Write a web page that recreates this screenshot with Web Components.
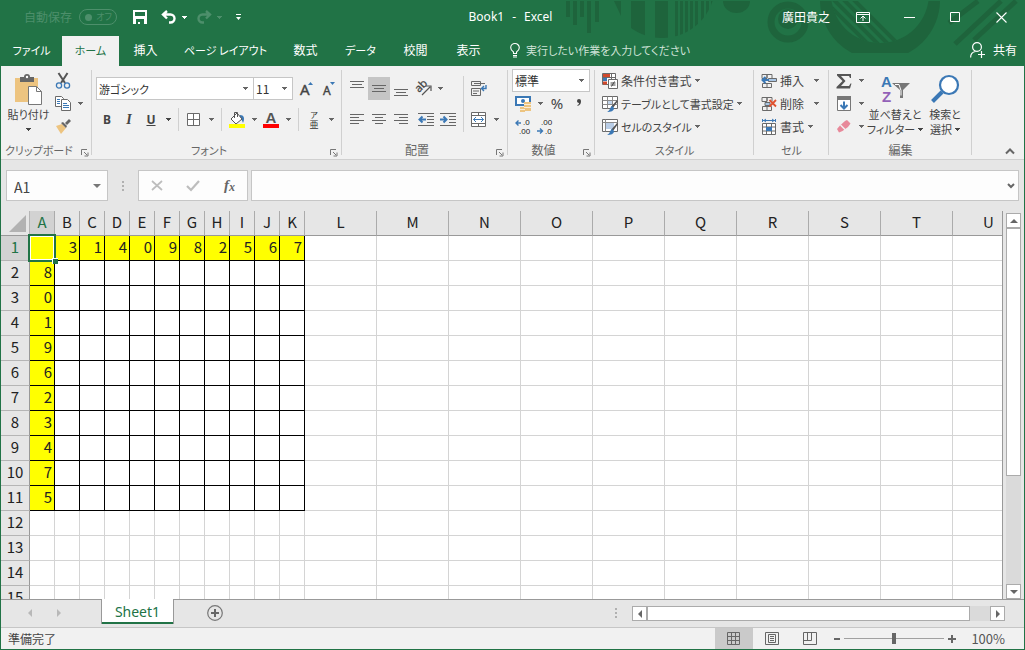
<!DOCTYPE html>
<html lang="ja">
<head>
<meta charset="utf-8">
<title>Book1 - Excel</title>
<style>
html, body { margin: 0; height: 100%; }
body { overflow: hidden; font: 12px/16px "Noto Sans CJK JP", sans-serif; font-feature-settings: "palt"; color: #444; background: #e6e6e6; }
</style>
</head>
<body>
<excel-app></excel-app>

<script>
const BASE = `<style>
*, ::before, ::after { box-sizing: border-box; }
button, input, select { font: inherit; font-feature-settings: inherit; color: inherit; background: none; border: 0; padding: 0; margin: 0; outline: 0; border-radius: 0; }
[hidden] { display: none !important; }
</style>`;

function define(name, html, setup) {
  const template = document.createElement('template');
  template.innerHTML = BASE + html;
  customElements.define(name, class extends HTMLElement {
    connectedCallback() {
      if (this.shadowRoot) return;
      const root = this.attachShadow({ mode: 'open' });
      root.append(template.content.cloneNode(true));
      if (setup) setup(root, this);
    }
  });
}

const G = '#6a6a6a', B = '#3b78b5';
const cellsBack = `<path d="M1 1.5h5v4H1zM6 1.5h5v4M1.500 10.500h9v4h-9zM6 10.500v4M6 1v4" fill="none" stroke="${G}"/>`;
const sheetBrush = fill => `<path d="M.5.5h15v12H.5z" fill="#fff" stroke="${G}"/>${fill}<path d="M15 4l1 1-5 7-2-1z" fill="#555"/><path d="M10 10l2 2c0 3-3 4-7 4 3-1 3-5 5-6z" fill="${B}"/>`;
const lines = (...l) => `<path d="${l.map(([x, y, w]) => `M${x} ${y}.5h${w}`).join('')}" stroke="#666"/>`;

const ICONS = {
  arrow: [5, 3, '<path d="M0 0h5v1H4v1H3v1H2V2H1V1H0z" fill="currentColor"/>'],
  save: [14, 14, '<path d="M0 0h14v14H0zM2 2v4h10V2zM3 9v5h2v-2h2v2h4V9z" fill="#fff" fill-rule="evenodd"/>'],
  undo: [16, 14, '<path d="M6 1L2 4.500 6 8.500M2 4.500h7.500a4 4 0 0 1 0 8H8" fill="none" stroke="#fff" stroke-width="2.400"/>'],
  redo: [16, 14, '<path d="M10 1l4 3.500-4 4M14 4.500H6.500a4 4 0 0 0 0 8H8" fill="none" stroke="#4d8f6b" stroke-width="2.400"/>'],
  customize: [5, 6, '<path d="M0 0h5v1H0zM0 3h5L2.500 6z" fill="#fff"/>'],
  display: [14, 11, '<path d="M.5.5h13v10H.5zM1 2.500h12M7 9V4.500M4.500 6.500L7 4l2.500 2.500" fill="none" stroke="#fff"/>'],
  minimize: [11, 11, '<path d="M0 5.500h11" stroke="#fff"/>'],
  maximize: [11, 11, '<path d="M.5.5h9v9h-9z" fill="none" stroke="#fff"/>'],
  close: [11, 11, '<path d="M.5.5l10 10M10.500.5l-10 10" stroke="#fff" stroke-width="1.100"/>'],
  bulb: [10, 15, '<path d="M3.500 10.500V9C2 8 .7 7 .7 4.800a4.300 4.300 0 0 1 8.600 0C9.300 7 8 8 6.500 9v1.500zM3 12.500h4M3 14h4" fill="none" stroke="#fff" stroke-width="1.100"/>'],
  share: [16, 16, '<circle cx="7" cy="5" r="4.400" fill="none" stroke="#fff" stroke-width="1.200"/><path d="M.6 15.500c0-3 2-5.500 5-6M8 12.500h7M11.500 9v7" fill="none" stroke="#fff" stroke-width="1.200"/>'],
  paste: [29, 32, '<path d="M1 4h23v24H1z" fill="#edc480"/><path d="M6 3h4a3 3 0 0 1 6 0h4v5H6z" fill="#666"/><circle cx="13" cy="3" r="1.200" fill="#fff"/><path d="M14.500 12.500h8l5 5v13h-13z" fill="#fff" stroke="#777"/><path d="M22.500 12.500v5h5" fill="none" stroke="#777"/>'],
  cut: [16, 16, `<path d="M3.500 0L10 10M12.500 0L6 10" stroke="#555" stroke-width="2"/><circle cx="4" cy="12.500" r="2.600" fill="none" stroke="${B}" stroke-width="1.300"/><circle cx="12" cy="12.500" r="2.600" fill="none" stroke="${B}" stroke-width="1.300"/>`],
  copy: [16, 15, `<path d="M.5.5h6l2 2v8h-8z" fill="#fff" stroke="${G}"/><path d="M6.500 3.500h6l3 3v8h-9z" fill="#fff" stroke="${G}"/><path d="M2 3.500h3M2 5.500h3M2 7.500h3M8 7.500h4M8 9.500h6M8 11.500h6" stroke="${B}"/>`],
  painter: [16, 15, '<path d="M1 7l6-2 4 4-5 6z" fill="#edc480"/><path d="M6 4l2-1 4 4-1 2zM10 4l4-4 2 2-4 4z" fill="#666"/>'],
  borders: [14, 14, `<path d="M.5.5h12v12H.5zM6.500 1v11M1 6.500h11" fill="#fff" stroke="${G}"/>`],
  fill: [16, 17, `<path d="M11 4c4 0 5 3 3 8-1-3-2-4-4-5z" fill="${B}"/><path d="M2 8l6-6 5 6-6 5z" fill="#fff" stroke="#555"/><path d="M5.500 7V1.500h3V6" fill="none" stroke="#555"/><path d="M0 13h16v4H0z" fill="#ff0"/>`],
  color: [16, 17, '<text x="8" y="12" text-anchor="middle" font-family="Liberation Sans" font-weight="700" font-size="15" fill="#555">A</text><path d="M0 13h16v4H0z" fill="red"/>'],
  grow: [14, 15, `<text x="0" y="14" font-family="Noto Sans" font-size="15" fill="#444" stroke="#444" stroke-width=".4">A</text><path d="M8 4h5l-2.500-3z" fill="${B}"/>`],
  shrink: [14, 15, `<text x="1" y="14" font-family="Noto Sans" font-size="12" fill="#444" stroke="#444" stroke-width=".4">A</text><path d="M8 1h5l-2.500 3z" fill="${B}"/>`],
  phonetic: [12, 18, '<text x="6" y="7" text-anchor="middle" font-size="8" fill="#333">ア</text><text x="6" y="17" text-anchor="middle" font-size="9" fill="#333">亜</text>'],
  top: [14, 16, lines([0, 0, 14], [2, 3, 10], [0, 6, 14])],
  middle: [14, 16, lines([0, 4, 14], [2, 7, 10], [0, 10, 14])],
  bottom: [14, 16, lines([0, 8, 14], [2, 11, 10], [0, 14, 14])],
  left: [14, 16, lines([0, 2, 14], [0, 5, 9], [0, 8, 14], [0, 11, 9])],
  center: [14, 16, lines([0, 2, 14], [3, 5, 8], [0, 8, 14], [3, 11, 8])],
  right: [14, 16, lines([0, 2, 14], [5, 5, 9], [0, 8, 14], [5, 11, 9])],
  orient: [18, 16, '<text transform="translate(5 12) rotate(-45)" font-family="Noto Sans" font-size="11" fill="#444" stroke="#444" stroke-width=".3">ab</text><path d="M8 14l8-8M12 5h5v5" fill="none" stroke="#555" stroke-width="1.200"/>'],
  outdent: [16, 14, lines([0, 0, 16], [9, 3, 7], [9, 6, 7], [9, 9, 7], [0, 12, 16]) + `<path d="M8 6.500H2M4.500 3.500l-3 3 3 3" fill="none" stroke="${B}" stroke-width="2"/>`],
  indent: [16, 14, lines([0, 0, 16], [9, 3, 7], [9, 6, 7], [9, 9, 7], [0, 12, 16]) + `<path d="M0 6.500h6M3.500 3.500l3 3-3 3" fill="none" stroke="${B}" stroke-width="2"/>`],
  wrap: [16, 16, `<path d="M.5.5h9v4h-9zM.5 7.500h9v7h-9zM3 2.500h11M2 10h6M2 12.500h4" fill="none" stroke="${G}"/><path d="M15 4v3.500h-4M13 5l-2.500 2.500L13 10" fill="none" stroke="${B}" stroke-width="1.400"/>`],
  merge: [16, 16, `<path d="M.5.5h14v14H.5zM.5 3.500h14M.5 11.500h14M7.500.5v3M7.500 11.500v3" fill="#fff" stroke="${G}"/><path d="M2.500 7.500h10M5 5L2.500 7.500 5 10M10 5l2.500 2.500L10 10" fill="none" stroke="${B}"/>`],
  money: [17, 16, `<path d="M1 1h14v8H1z" fill="#fff" stroke="${B}" stroke-width="2"/><circle cx="8" cy="5" r="2" fill="${B}"/><path d="M9 6h7v9H9z" fill="#edc480"/><path d="M5 11h5v5H5z" fill="#edc480"/><path d="M9 8.500h7M9 11.500h7M5 13.500h5" stroke="#fff" stroke-width=".7"/>`],
  percent: [14, 16, '<text x="7" y="13" text-anchor="middle" font-family="Noto Sans" font-size="15" fill="#444">%</text>'],
  comma: [8, 16, '<path d="M2 5a2 2 0 1 1 4 0c0 3-1 4-3.500 5v-1C4 8.500 4 7.500 4 7 3 7 2 6 2 5z" fill="#444"/>'],
  incdec: [16, 16, `<text x="8" y="6" font-family="Liberation Sans" font-size="8" fill="#222">.0</text><text x="4" y="15" font-family="Liberation Sans" font-size="8" fill="#222">.00</text><path d="M6 4H1M3.500 1.500L1 4l2.500 2.500" fill="none" stroke="${B}" stroke-width="1.400"/>`],
  decdec: [16, 16, `<text x="4" y="6" font-family="Liberation Sans" font-size="8" fill="#222">.00</text><text x="8" y="15" font-family="Liberation Sans" font-size="8" fill="#222">.0</text><path d="M0 12h5M3 9.500L5.500 12 3 14.500" fill="none" stroke="${B}" stroke-width="1.400"/>`],
  cond: [16, 16, `<path d="M.5.5h13v11H.5z" fill="#fff" stroke="${G}"/><path d="M1 1h7v3H1z" fill="#d0492c"/><path d="M1 5h4v3H1z" fill="${B}"/><path d="M1 8.500h4v3H1z" fill="#d0492c"/><path d="M1 4.500h13M9.500 1v5" stroke="${G}"/><path d="M6.500 6.500h9v9h-9z" fill="#fff" stroke="${G}"/><path d="M8.500 10h5M8.500 12h5M12.500 8.500l-3 5" stroke="#444"/>`],
  table: [16, 16, sheetBrush(`<path d="M5 4h6v5H5z" fill="#c3d6ec"/><path d="M.5 4.500h15M.5 8.500h15M5.500.5v12M10.500.5v12" stroke="#8a8a8a"/>`)],
  cellstyle: [16, 16, sheetBrush(`<path d="M4 3h8v7H4z" fill="#b9cde6"/><path d="M.5 3.500h15M3.500.5v12" stroke="#8a8a8a"/>`)],
  insert: [16, 16, cellsBack + `<path d="M7.500 5.500h8v3h-8z" fill="#a9c6e5" stroke="${G}"/><path d="M8 7H2M4.500 4L1.500 7l3 3" fill="none" stroke="${B}" stroke-width="2"/>`],
  delete: [16, 16, cellsBack + `<path d="M4 6.500h5v3H4z" fill="#a9c6e5" stroke="${G}"/><path d="M8.500 4l6.500 6.500M15 4l-6.500 6.500" stroke="#e0522f" stroke-width="1.800"/>`],
  format: [16, 16, `<path d="M1.500 4.500h13v11h-13zM1.500 8h13M1.500 12h13M5.500 4v11M10.500 4v11" fill="#fff" stroke="${G}"/><path d="M5 8h6v4H5z" fill="${B}"/><path d="M2 1.500h12M1.500 0v3M14.500 0v3M5 0L3 1.500 5 3M11 0l2 1.500L11 3" stroke="${B}" fill="none"/>`],
  sum: [16, 16, '<path d="M1 1h14v4h-1l-1-2H5l4.500 5L5 13h8l1.500-2.500h1L14 15.500H.5V14L6.500 8 1 2.500z" fill="#555"/>'],
  filldown: [14, 16, `<path d="M.5 1.500h13v13H.5z" fill="#fff" stroke="#777"/><path d="M0 0h14v4H0z" fill="#777"/><path d="M7 5.500v7M3.500 9L7 12.500 10.500 9" fill="none" stroke="${B}" stroke-width="2"/>`],
  eraser: [14, 13, '<path d="M8 1l2-1 3.500 3.500L11 7 5.500 11 2 12.500 0 9 3 5.500z" fill="#e8899a"/><path d="M3.500 5l5 5" stroke="#f1f1f1" stroke-width="1.500"/>'],
  sort: [30, 29, `<text x="1" y="12" font-family="Liberation Sans" font-weight="700" font-size="15" fill="${B}">A</text><text x="2" y="27" font-family="Liberation Sans" font-weight="700" font-size="15" fill="#9361b8">Z</text><path d="M12 8h18l-7 7v8h-3v-8z" fill="#777"/><path d="M15 9.500h4l2 6v5" fill="none" stroke="#fff"/>`],
  find: [29, 29, `<path d="M11 17L1.500 26.500" stroke="${B}" stroke-width="4"/><circle cx="18" cy="10" r="9" fill="#fff" stroke="${B}" stroke-width="2.200"/>`],
  launcher: [8, 8, '<path d="M.5 6V.5H6M3 3l3 3M7 3.500V7H3.500" fill="none" stroke="#777"/>'],
  collapse: [10, 6, '<path d="M1 5.500l4-4 4 4" fill="none" stroke="#666" stroke-width="2"/>'],
  cancel: [12, 11, '<path d="M1 1l10 9M11 1L1 10" stroke="#bdbdbd" stroke-width="1.700"/>'],
  enter: [14, 11, '<path d="M1 6l4 4 8-9" fill="none" stroke="#bdbdbd" stroke-width="2.200"/>'],
  fx: [12, 16, '<text x="1" y="12" font-family="Liberation Serif" font-style="italic" font-weight="700" font-size="15" fill="#666">f</text><text x="6" y="13" font-family="Liberation Serif" font-style="italic" font-weight="700" font-size="12" fill="#666">x</text>'],
  expand: [8, 6, '<path d="M1 1l3 3 3-3" fill="none" stroke="#666" stroke-width="2"/>'],
  namearrow: [8, 4, '<path d="M0 0h8L4 4z" fill="#777"/>'],
  dots: [2, 10, '<path d="M0 0h2v2H0zM0 4h2v2H0zM0 8h2v2H0z" fill="#b0b0b0"/>'],
  prev: [4, 8, '<path d="M4 0v8L0 4z" fill="currentColor"/>'],
  next: [4, 8, '<path d="M0 0v8l4-4z" fill="currentColor"/>'],
  up: [8, 4, '<path d="M0 4h8L4 0z" fill="currentColor"/>'],
  down: [8, 4, '<path d="M0 0h8L4 4z" fill="currentColor"/>'],
  add: [16, 16, '<circle cx="8" cy="8" r="7.300" fill="none" stroke="#777" stroke-width="1.200"/><path d="M8 4v8M4 8h8" stroke="#666" stroke-width="2"/>'],
  normal: [14, 13, '<path d="M.5.5h12v12H.5zM.5 4.500h12M.5 8.500h12M4.500.5v12M8.500.5v12" fill="none" stroke="#666"/>'],
  page: [14, 13, '<path d="M.5.5h13v12H.5zM3.500 2.500h7v8h-7zM5 4.500h4M5 6.500h4M5 8.500h4" fill="none" stroke="#666"/>'],
  breaks: [14, 13, '<path d="M.5.5h13v12H.5zM.5 8.500h8M4.500.5v8M8.500.5v8" fill="none" stroke="#666"/>'],
  minus: [6, 8, '<path d="M0 4h6" stroke="#666" stroke-width="2"/>'],
  plus: [8, 8, '<path d="M0 4h8M4 0v8" stroke="#666" stroke-width="2"/>'],
};

define('xl-icon', `<style>
:host { display: inline-flex; flex: none; }
svg { display: block; overflow: visible; }
</style>`, (root, el) => {
  const [w, h, body] = ICONS[el.getAttribute('name')];
  root.innerHTML += `<svg width="${w}" height="${h}" viewBox="0 0 ${w} ${h}" aria-hidden="true">${body}</svg>`;
});

/* Small ribbon command: icon, optional slotted caption, optional drop-down arrow */
define('tool-button', `<style>
:host { display: flex; height: 23px; }
:host([dense]) { font-size: 11px; }
button { display: flex; align-items: center; white-space: nowrap; }
.icon { display: flex; width: 22px; justify-content: center; }
.menu { width: 12px; justify-content: center; color: #666; }
:host([pressed]) .main { background: #c5c5c5; }
:host([split]) .menu { margin-left: 6px; }
</style>
<button class="main"><span class="icon"></span><slot></slot></button><button class="menu" aria-label="メニュー"><xl-icon name="arrow"></xl-icon></button>`,
(root, el) => {
  root.querySelector('.icon').innerHTML = `<xl-icon name="${el.getAttribute('icon')}"></xl-icon>`;
  root.querySelector('.menu').hidden = !el.hasAttribute('menu');
  root.querySelector('.main').setAttribute('aria-label', el.getAttribute('label') || el.textContent);
});

/* Bold / italic / underline */
define('text-button', `<style>
:host { display: flex; height: 23px; }
button { width: 22px; font: 700 12px/16px "Noto Sans", sans-serif; }
</style><button><slot></slot></button>`);

define('large-button', `<style>
:host { display: flex; font-size: 11px; }
button { display: flex; flex-direction: column; align-items: center; width: 100%; line-height: 15px; white-space: nowrap; }
.icon { display: flex; height: 35px; align-items: center; }
.caption { display: flex; flex-direction: column; align-items: center; }
</style><button><span class="icon"></span><span class="caption"><slot></slot></span></button>`,
(root, el) => { root.querySelector('.icon').innerHTML = `<xl-icon name="${el.getAttribute('icon')}"></xl-icon>`; });

define('drop-select', `<style>
:host { display: grid; height: 23px; border: 1px solid #c6c6c6; background: #fff; }
select, xl-icon { grid-area: 1 / 1; align-self: center; }
select { appearance: none; width: 100%; height: 21px; padding-left: 2px; color: #333; }
xl-icon { justify-self: end; padding-right: 5px; color: #666; pointer-events: none; }
:host([dense]) { font-size: 11px; }
</style><select></select><xl-icon name="arrow"></xl-icon>`,
(root, el) => {
  const s = root.querySelector('select');
  s.add(new Option(el.getAttribute('value')));
  s.setAttribute('aria-label', el.getAttribute('label'));
});

define('ribbon-group', `<style>
:host { display: flex; flex-direction: column; flex: none; position: relative; padding: 0 4px; }
:host::after { content: ""; position: absolute; right: 0; top: 4px; bottom: 4px; width: 1px; background: #d0d0d0; }
.content { flex: 1; display: flex; align-items: flex-start; }
footer { display: grid; height: 16px; margin-bottom: 1px; text-align: center; color: #666; white-space: nowrap; }
footer span, footer button { grid-area: 1 / 1; }
:host([launcher]) span { padding-right: 16px; }
:host([dense]) footer { font-size: 11px; }
footer button { justify-self: end; align-self: end; padding-bottom: 1px; display: flex; }
</style><div class="content"><slot></slot></div><footer><span></span><button aria-label="詳細"><xl-icon name="launcher"></xl-icon></button></footer>`,
(root, el) => {
  root.querySelector('span').textContent = el.getAttribute('name');
  root.querySelector('footer button').hidden = !el.hasAttribute('launcher');
});

define('title-bar', `<style>
:host { display: grid; grid-template-columns: 1fr auto 1fr; align-items: center; height: 34px; color: #fff; }
.quick, .title, .window { display: flex; align-items: center; }
.quick { padding-left: 23px; color: #4d8f6b; }
.switch { display: flex; align-items: center; justify-content: space-between; width: 38px; height: 16px; margin: 0 16px 0 7px; padding: 0 4px 0 5px; border: 1px solid #4d8f6b; border-radius: 8px; font-size: 9px; white-space: nowrap; }
.switch input { appearance: none; flex: none; width: 7px; height: 7px; border-radius: 4px; background: #4d8f6b; }
button { display: flex; justify-content: center; align-items: center; height: 24px; }
.save { width: 14px; margin-right: 14px; }
.hist { width: 16px; }
.more { width: 14px; margin-right: 5px; }
.white { color: #fff; }
.title { gap: 8px; padding-right: 4px; font-family: "Noto Sans", sans-serif; }
.window { justify-content: flex-end; }
.window button { width: 46px; }
.user { padding-right: 10px; }
</style>
<div class="quick"><label for="auto">自動保存</label><div class="switch"><input id="auto" type="checkbox"><span>オフ</span></div>
<button class="save" aria-label="上書き保存"><xl-icon name="save"></xl-icon></button>
<button class="hist" aria-label="元に戻す"><xl-icon name="undo"></xl-icon></button><button class="more white" aria-label="履歴"><xl-icon name="arrow"></xl-icon></button>
<button class="hist" aria-label="やり直し"><xl-icon name="redo"></xl-icon></button><button class="more" aria-label="履歴"><xl-icon name="arrow"></xl-icon></button>
<button class="more" aria-label="カスタマイズ"><xl-icon name="customize"></xl-icon></button></div>
<div class="title"><span>Book1</span><span>-</span><span>Excel</span></div>
<div class="window"><span class="user">廣田貴之</span>
<button aria-label="リボンの表示オプション"><xl-icon name="display"></xl-icon></button><button aria-label="最小化"><xl-icon name="minimize"></xl-icon></button><button aria-label="元に戻す"><xl-icon name="maximize"></xl-icon></button><button aria-label="閉じる"><xl-icon name="close"></xl-icon></button></div>`);

define('ribbon-tabs', `<style>
:host { display: flex; height: 30px; align-items: stretch; color: #fff; }
nav { display: grid; grid-template-columns: 61px 57px 53px 107px 53px 57px 53px 53px; }
a { display: flex; align-items: center; justify-content: center; padding-bottom: 2px; color: inherit; text-decoration: none; white-space: nowrap; }
.kana { font-size: 11px; }
a.on { background: #f1f1f1; color: #217346; }
.tell, .share { display: flex; align-items: center; padding-bottom: 2px; }
.tell { flex: 1; gap: 6px; padding-left: 15px; font-size: 11px; }
input { flex: 1; }
input::placeholder { color: #cfe2d7; opacity: 1; }
.share { gap: 7px; padding-right: 7px; }
</style>
<nav><a class="kana" href="#">ファイル</a><a class="kana on" href="#">ホーム</a><a href="#">挿入</a><a class="kana" href="#">ページ レイアウト</a><a href="#">数式</a><a class="kana" href="#">データ</a><a href="#">校閲</a><a href="#">表示</a></nav>
<div class="tell"><xl-icon name="bulb"></xl-icon><input aria-label="操作アシスト" placeholder="実行したい作業を入力してください"></div>
<button class="share"><xl-icon name="share"></xl-icon>共有</button>`);

define('header-art', `<style>
:host { position: absolute; top: 0; right: 0; pointer-events: none; }
svg { display: block; }
</style>
<svg width="464" height="66" viewBox="560 0 464 66" fill="#1e643c" stroke="none" aria-hidden="true">
<clipPath id="disc"><circle cx="662" cy="-15" r="53"/></clipPath>
<clipPath id="bowl"><path d="M810 1h140v52H810z"/></clipPath>
<clipPath id="inner"><circle cx="880" cy="-6" r="49"/></clipPath>
<path d="M566 1h4v16h-4zM573 1h4v24h-4zM580 1h4v16h-4zM587 1h4v32h-4zM595 1h4v21h-4zM614 1h7v15z"/>
<path clip-path="url(#disc)" d="M631 1h14v50h-14zM655 1h13v50h-13zM675 1h3v50h-3zM680 1h3v50h-3zM685 1h3v50h-3zM690 1h3v50h-3zM695 1h3v50h-3zM701 1h3v50h-3zM706 1h3v50h-3zM711 1h3v50h-3z"/>
<path d="M723 1a13.500 12 0 0 0 27 0z"/>
<circle cx="788" cy="22" r="17" fill="none" stroke="#1e643c" stroke-width="7"/><circle cx="788" cy="19" r="10"/>
<g clip-path="url(#bowl)"><circle cx="880" cy="0" r="60"/><circle cx="880" cy="-6" r="49" fill="#217346"/>
<g clip-path="url(#inner)" stroke="#1e643c" stroke-width="4"><path d="M818-6l60 60M828-6l60 60M838-6l60 60M848-6l60 60"/></g></g>
<g stroke="#1e643c" stroke-width="5"><path d="M978 1l-29 22M1001 1l-46 43M1016 1l-42 39"/></g>
</svg>`);

define('excel-ribbon', `<style>
:host { display: flex; height: 94px; background: #f1f1f1; border-bottom: 1px solid #d0d0d0; }
.col { display: flex; flex-direction: column; }
.three { padding-top: 3px; }
.two { padding-top: 11px; gap: 8px; }
.row { display: flex; }
.sep { width: 1px; height: 23px; margin: 0 4px; background: #d0d0d0; }
.tall { height: 56px; margin: 10px 4px 0; }
.paste { width: 47px; padding-top: 6px; }
.edit { padding-top: 6px; }
.clip { width: 91px; } .font { width: 250px; } .align { width: 166px; } .num { width: 87px; }
.styles { width: 159px; } .cells { width: 75px; } .editing { width: 143px; }
.family { width: 158px; } .size { width: 40px; margin-left: -1px; } .fmt { width: 78px; }
.sort { width: 56px; } .find { width: 44px; }
.line { display: flex; align-items: center; gap: 3px; min-height: 15px; }
.gap { margin-left: 3px; }
.plain { width: 12px; display: flex; align-items: center; justify-content: center; }
i, u { font-weight: 700; } i { font-family: "Liberation Serif", serif; font-size: 14px; }
.collapse { margin: auto 9px 5px auto; display: flex; }
</style>
<ribbon-group class="clip" name="クリップボード" launcher dense>
  <large-button class="paste" icon="paste"><span>貼り付け</span><span class="line"><xl-icon name="arrow"></xl-icon></span></large-button>
  <div class="col three"><tool-button icon="cut" label="切り取り"></tool-button><tool-button icon="copy" label="コピー" menu></tool-button><tool-button icon="painter" label="書式のコピー"></tool-button></div>
</ribbon-group>
<ribbon-group class="font" name="フォント" launcher dense>
  <div class="col two">
    <div class="row"><drop-select class="family" label="フォント" value="游ゴシック" dense></drop-select><drop-select class="size" label="サイズ" value="11"></drop-select><tool-button class="gap" icon="grow" label="拡大"></tool-button><tool-button icon="shrink" label="縮小"></tool-button></div>
    <div class="row"><text-button>B</text-button><text-button><i>I</i></text-button><text-button><u>U</u></text-button><button class="plain" aria-label="下線"><xl-icon name="arrow"></xl-icon></button><span class="sep"></span><tool-button icon="borders" label="罫線" menu></tool-button><span class="sep"></span><tool-button icon="fill" label="塗りつぶし" menu></tool-button><tool-button icon="color" label="文字色" menu></tool-button><span class="sep"></span><tool-button icon="phonetic" label="ふりがな" menu></tool-button></div>
  </div>
</ribbon-group>
<ribbon-group class="align" name="配置" launcher>
  <div class="col two">
    <div class="row"><tool-button icon="top" label="上揃え"></tool-button><tool-button icon="middle" label="上下中央" pressed></tool-button><tool-button icon="bottom" label="下揃え"></tool-button><tool-button icon="orient" label="方向" menu></tool-button></div>
    <div class="row"><tool-button icon="left" label="左揃え"></tool-button><tool-button icon="center" label="中央揃え"></tool-button><tool-button icon="right" label="右揃え"></tool-button><tool-button class="gap" icon="outdent" label="インデント減"></tool-button><tool-button icon="indent" label="インデント増"></tool-button></div>
  </div>
  <span class="sep tall"></span>
  <div class="col two"><tool-button icon="wrap" label="折り返し"></tool-button><tool-button icon="merge" label="結合" menu></tool-button></div>
</ribbon-group>
<ribbon-group class="num" name="数値" launcher>
  <div class="col three">
    <drop-select class="fmt" label="表示形式" value="標準"></drop-select>
    <div class="row"><tool-button icon="money" label="通貨" menu></tool-button><tool-button icon="percent" label="パーセント"></tool-button><tool-button icon="comma" label="桁区切り"></tool-button></div>
    <div class="row"><tool-button icon="incdec" label="小数増"></tool-button><tool-button icon="decdec" label="小数減"></tool-button></div>
  </div>
</ribbon-group>
<ribbon-group class="styles" name="スタイル" dense>
  <div class="col three"><tool-button icon="cond" menu>条件付き書式</tool-button><tool-button icon="table" menu dense>テーブルとして書式設定</tool-button><tool-button icon="cellstyle" menu dense>セルのスタイル</tool-button></div>
</ribbon-group>
<ribbon-group class="cells" name="セル" dense>
  <div class="col three"><tool-button icon="insert" menu split>挿入</tool-button><tool-button icon="delete" menu split>削除</tool-button><tool-button icon="format" menu>書式</tool-button></div>
</ribbon-group>
<ribbon-group class="editing" name="編集">
  <div class="col three"><tool-button icon="sum" label="合計" menu></tool-button><tool-button icon="filldown" label="フィル" menu></tool-button><tool-button icon="eraser" label="クリア" menu></tool-button></div>
  <large-button class="sort edit" icon="sort"><span>並べ替えと</span><span class="line">フィルター<xl-icon name="arrow"></xl-icon></span></large-button>
  <large-button class="find edit" icon="find"><span>検索と</span><span class="line">選択<xl-icon name="arrow"></xl-icon></span></large-button>
</ribbon-group>
<button class="collapse" aria-label="リボンを折りたたむ"><xl-icon name="collapse"></xl-icon></button>`);

define('formula-bar', `<style>
:host { display: flex; align-items: center; height: 51px; padding: 0 5px; background: #e6e6e6; }
.box { display: flex; align-items: center; height: 31px; background: #fdfdfd; border: 1px solid #c6c6c6; }
.name { width: 102px; }
.name input { flex: 1; min-width: 0; padding: 3px 0 0 7px; font-size: 14px; }
.name button { padding-right: 6px; }
button { display: flex; justify-content: center; }
.dots { margin: 0 14px; }
.keys { width: 110px; margin-right: 3px; }
.keys button { flex: 1; }
.formula { flex: 1; }
.formula input { flex: 1; min-width: 0; padding: 0 6px; font-size: 14px; }
.formula button { padding-right: 3px; }
</style>
<div class="box name"><input aria-label="名前ボックス" value="A1"><button aria-label="名前の一覧"><xl-icon name="namearrow"></xl-icon></button></div>
<xl-icon class="dots" name="dots"></xl-icon>
<div class="box keys"><button aria-label="キャンセル"><xl-icon name="cancel"></xl-icon></button><button aria-label="入力"><xl-icon name="enter"></xl-icon></button><button aria-label="関数の挿入"><xl-icon name="fx"></xl-icon></button></div>
<div class="box formula"><input aria-label="数式バー"><button aria-label="展開"><xl-icon name="expand"></xl-icon></button></div>`);

define('scroll-bar', `<style>
:host { display: flex; color: #666; }
:host([vertical]) { flex-direction: column; width: 15px; }
:host(:not([vertical])) { height: 15px; }
button { display: flex; flex: none; width: 15px; height: 15px; align-items: center; justify-content: center; background: #fff; border: 1px solid #ababab; }
.track { display: flex; flex: 1; flex-direction: inherit; background: #dadada; }
.thumb { background: #fff; border: 1px solid #ababab; flex: 248; }
.rest { flex: 109; }
:host(:not([vertical])) .rest { flex: 20; } :host(:not([vertical])) .thumb { flex: 323; }
</style><button aria-label="戻る"></button><div class="track"><div class="thumb"></div><div class="rest"></div></div><button aria-label="進む"></button>`,
(root, el) => {
  const names = el.hasAttribute('vertical') ? ['up', 'down'] : ['prev', 'next'];
  root.querySelectorAll('button').forEach((b, i) => { b.innerHTML = `<xl-icon name="${names[i]}"></xl-icon>`; });
});

define('sheet-grid', `<style>
:host { display: flex; flex: 1; min-height: 0; background: #e6e6e6; }
.view { flex: 1; min-width: 0; overflow: hidden; border-right: 1px solid #999; background: linear-gradient(#e6e6e6 25px, #fff 0); }
.gutter { display: flex; width: 21px; padding: 2px 3px 0; }
table { table-layout: fixed; width: 1px; border-collapse: separate; border-spacing: 0; font-size: 15px; line-height: 22px; color: #222; }
tr { height: 25px; }
th, td { height: 25px; padding: 0 0 2px; border: solid #d4d4d4; border-width: 0 1px 1px 0; overflow: hidden; white-space: nowrap; }
th { font-weight: 400; background: #e6e6e6; }
thead th { border-bottom-color: #999; border-right-color: #ababab; }
tbody th { border-right-color: #999; border-bottom-color: #b5b5b5; }
thead th:first-child { border-right-color: #b5b5b5; }
th.on { background: #d2d2d2; color: #217346; }
td { background: #fff; text-align: right; padding-right: 2px; }
td.used { border-color: #000; }
td.fill { background: #ff0; }
.corner { display: block; margin: 4px 3px 1px auto; width: 17px; height: 17px; background: #b2b2b2; clip-path: polygon(100% 0, 100% 100%, 0 100%); }
td.active { position: relative; overflow: visible; }
td.active::before { content: ""; position: absolute; inset: -2px; border: 2px solid #217346; box-shadow: inset 0 0 0 1px #fff; }
td.active::after { content: ""; position: absolute; right: -4px; bottom: -4px; width: 6px; height: 6px; background: #217346; border: solid #fff; border-width: 1px 0 0 1px; }
</style><div class="view"><table><colgroup></colgroup><thead></thead><tbody></tbody></table></div><div class="gutter"><scroll-bar vertical></scroll-bar></div>`,
(root) => {
  /* Only the columns and rows that fit in the window are built */
  const narrow = 11;
  const columns = Math.min(26, narrow + Math.max(1, Math.ceil((innerWidth - 328) / 72)));
  const rowCount = Math.max(narrow, Math.ceil((innerHeight - 288) / 25));
  const letters = [...'ABCDEFGHIJKLMNOPQRSTUVWXYZ'].slice(0, columns);
  const across = [null, 3, 1, 4, 0, 9, 8, 2, 5, 6, 7];
  const down = [null, 8, 0, 1, 9, 6, 2, 3, 4, 7, 5];
  root.querySelector('colgroup').innerHTML = '<col style="width:29px">' + letters.map((_, i) => `<col style="width:${i < narrow ? 25 : 72}px">`).join('');
  root.querySelector('thead').innerHTML = '<tr><th><span class="corner"></span></th>' + letters.map((l, i) => `<th scope="col"${i ? '' : ' class="on"'}>${l}</th>`).join('') + '</tr>';
  let rows = '';
  for (let r = 0; r < rowCount; r++) {
    rows += `<tr><th scope="row"${r ? '' : ' class="on"'}>${r + 1}</th>`;
    for (let c = 0; c < letters.length; c++) {
      const used = r < narrow && c < narrow;
      const cls = [used && 'used', used && (r === 0 || c === 0) && 'fill', r + c === 0 && 'active'].filter(Boolean).join(' ');
      const v = !used ? '' : r === 0 ? across[c] ?? '' : c === 0 ? down[r] : '';
      rows += `<td class="${cls}">${v}</td>`;
    }
    rows += '</tr>';
  }
  root.querySelector('tbody').innerHTML = rows;
});

define('sheet-tabs', `<style>
:host { display: flex; flex: none; height: 28px; background: linear-gradient(#999 1px, #e6e6e6 0); color: #b8b8b8; }
.nav { display: flex; width: 100px; padding: 0 40px 0 27px; justify-content: space-between; align-items: center; }
.tab { height: 25px; width: 73px; background: #fff; border: solid #999; border-width: 0 1px; box-shadow: inset 0 -2px #217346; color: #217346; font: 14px/22px "Noto Sans", sans-serif; }
button { display: flex; align-items: center; justify-content: center; }
.add { margin-left: 33px; }
.dots { margin: 0 15px 0 auto; align-self: center; }
scroll-bar { flex: 0 1 373px; margin: 7px 19px 0 0; }
</style>
<div class="nav"><button aria-label="前"><xl-icon name="prev"></xl-icon></button><button aria-label="次"><xl-icon name="next"></xl-icon></button></div>
<button class="tab">Sheet1</button><button class="add" aria-label="新しいシート"><xl-icon name="add"></xl-icon></button>
<xl-icon class="dots" name="dots"></xl-icon><scroll-bar></scroll-bar>`);

define('status-bar', `<style>
:host { display: flex; flex: none; height: 22px; border-top: 1px solid #c6c6c6; background: #f1f1f1; align-items: center; padding: 0 19px 0 7px; }
.state { flex: 1; }
button { display: flex; align-items: center; justify-content: center; height: 21px; }
.view { width: 38px; } .on { background: #cacaca; }
.minus { width: 15px; } .plus { width: 16px; }
input { appearance: none; width: 100px; height: 11px; background: linear-gradient(#a0a0a0, #a0a0a0) center / 100% 1px no-repeat; }
input::-webkit-slider-thumb { appearance: none; width: 4px; height: 11px; background: #666; }
output { width: 45px; text-align: right; font-size: 13px; color: #555; }
</style>
<span class="state">準備完了</span>
<button class="view on" aria-label="標準"><xl-icon name="normal"></xl-icon></button><button class="view" aria-label="ページ レイアウト"><xl-icon name="page"></xl-icon></button><button class="view" aria-label="改ページ"><xl-icon name="breaks"></xl-icon></button>
<button class="minus" aria-label="縮小"><xl-icon name="minus"></xl-icon></button><input type="range" aria-label="ズーム" value="50"><button class="plus" aria-label="拡大"><xl-icon name="plus"></xl-icon></button>
<output>100%</output>`);

define('excel-app', `<style>
:host { display: flex; flex-direction: column; height: 100vh; border: solid #217346; border-width: 0 1px 1px; overflow: hidden; box-sizing: border-box; }
header { position: relative; flex: none; background: #217346; }
title-bar, ribbon-tabs { position: relative; }
title-bar { margin-bottom: 2px; }
excel-ribbon, formula-bar { flex: none; }
</style>
<header><header-art></header-art><title-bar></title-bar><ribbon-tabs></ribbon-tabs></header>
<excel-ribbon></excel-ribbon>
<formula-bar></formula-bar>
<sheet-grid></sheet-grid>
<sheet-tabs></sheet-tabs>
<status-bar></status-bar>`);
</script>
</body>
</html>
